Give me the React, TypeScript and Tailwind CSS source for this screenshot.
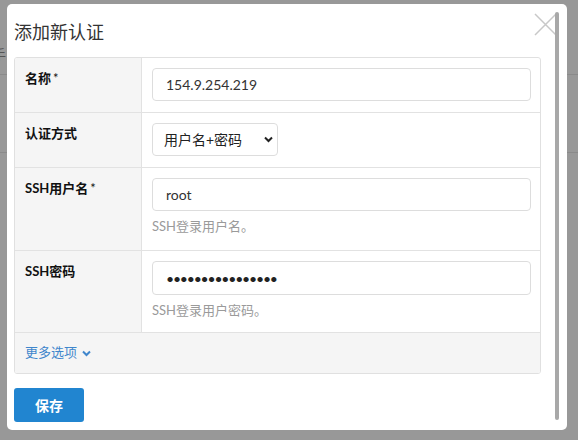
import { useState } from "react";

const font = { fontFamily: 'Lato, "Noto Sans CJK SC", sans-serif' };

function Row({
  label,
  required,
  children,
}: {
  label: string;
  required?: boolean;
  children: React.ReactNode;
}) {
  return (
    <div className="flex border-b border-[#e2e2e2]">
      <div className="w-[127px] shrink-0 bg-[#f5f5f5] border-r border-[#e2e2e2] pl-[10px] pt-[11px] text-[13px] leading-[18px] font-bold text-[#111]">
        {label}
        {required && <span className="font-normal ml-[2px]">*</span>}
      </div>
      <div className="flex-1 pl-[10px] pr-[9px] pt-[10px] pb-[11px]">{children}</div>
    </div>
  );
}

export default function App() {
  const [name, setName] = useState("154.9.254.219");
  const [user, setUser] = useState("root");
  const [pass, setPass] = useState("abcdefghijklmnop");

  return (
    <div className="relative w-[578px] h-[440px] overflow-hidden bg-[#989898]" style={font}>
      {/* page behind the overlay */}
      <div className="flex flex-col">
        <div className="h-[44px]" />
        <div className="h-[31px] border-b border-[#8a8a8a] pl-0 text-[14px] leading-[22px] text-[#555] -ml-[8px]">
          手
        </div>
        <div className="h-[78px] border-b border-[#8a8a8a]" />
      </div>

      {/* modal */}
      <div className="absolute left-[7px] top-[4px] w-[560px] h-[426px] bg-white rounded-[5px] overflow-hidden">
        <div className="pl-[7px] pr-[26px] pt-[16px]">
          <h2 className="text-[18px] leading-[24px] text-[#333] font-normal">添加新认证</h2>

          <div className="mt-[13px] border border-[#e0e0e0] rounded-[3px] overflow-hidden">
            <Row label="名称" required>
              <input
                value={name}
                onChange={(e) => setName(e.target.value)}
                className="w-full h-[33px] border border-[#ddd] rounded-[4px] px-[13px] text-[14px] text-[#333] outline-none"
              />
            </Row>
            <Row label="认证方式">
              <div className="relative w-[126px]">
                <select className="w-full h-[33px] appearance-none border border-[#ddd] rounded-[4px] pl-[11px] text-[14px] text-[#222] bg-white outline-none">
                  <option>用户名+密码</option>
                  <option>私钥</option>
                </select>
                <svg
                  className="pointer-events-none absolute right-[5px] top-[13px]"
                  width="9"
                  height="7"
                  viewBox="0 0 9 7"
                >
                  <path d="M1 1.5 L4.5 5 L8 1.5" stroke="#222" strokeWidth="2" fill="none" />
                </svg>
              </div>
            </Row>
            <Row label="SSH用户名" required>
              <input
                value={user}
                onChange={(e) => setUser(e.target.value)}
                className="w-full h-[33px] border border-[#ddd] rounded-[4px] px-[13px] text-[14px] text-[#333] outline-none"
              />
              <p className="mt-[6px] mb-[4px] text-[13px] leading-[18px] text-[#9a9a9a]">SSH登录用户名。</p>
            </Row>
            <Row label="SSH密码">
              <input
                type="password"
                value={pass}
                onChange={(e) => setPass(e.target.value)}
                className="w-full h-[34px] border border-[#ddd] rounded-[4px] px-[13px] text-[14px] text-[#222] tracking-[-1.2px] outline-none"
              />
              <p className="mt-[6px] mb-[2px] text-[13px] leading-[18px] text-[#9a9a9a]">SSH登录用户密码。</p>
            </Row>
            <div className="h-[40px] bg-[#f5f5f5] pl-[10px] flex items-center gap-[5px] text-[13px] text-[#3f86cc]">
              <span>更多选项</span>
              <svg width="9" height="7" viewBox="0 0 9 7">
                <path d="M1 1.5 L4.5 5 L8 1.5" stroke="#3f86cc" strokeWidth="2" fill="none" />
              </svg>
            </div>
          </div>

          <button className="mt-[14px] w-[70px] h-[34px] rounded-[3px] bg-[#2185d0] text-white text-[14px] font-bold">
            保存
          </button>
        </div>

        {/* close */}
        <svg className="absolute left-[527px] top-[9px]" width="23" height="23" viewBox="0 0 23 23">
          <path d="M1 1 L22 22 M22 1 L1 22" stroke="#c8c8c8" strokeWidth="1.5" />
        </svg>

        {/* scrollbar thumb */}
        <div className="absolute left-[548px] top-[8px] w-[4px] h-[408px] rounded-full bg-[#a8a8a8]" />
      </div>
    </div>
  );
}
